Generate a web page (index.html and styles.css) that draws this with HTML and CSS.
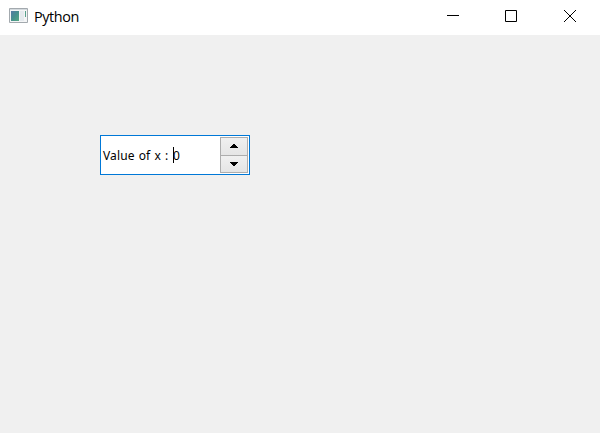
FILE: index.html
```html
<!DOCTYPE html>
<html lang="en">
<head>
<meta charset="utf-8">
<title>Python</title>
<link rel="stylesheet" href="styles.css">
</head>
<body>
<div class="window">
  <header class="titlebar">
    <svg class="app-icon" width="19" height="15" viewBox="0 0 19 15">
      <defs><linearGradient id="g" x1="0" y1="0" x2="1" y2="1"><stop offset="0" stop-color="#5579a5"/><stop offset=".5" stop-color="#46908d"/><stop offset="1" stop-color="#56a882"/></linearGradient></defs>
      <path d="M.5.5h18v14H.5z" fill="#f4f5f6" stroke="#a3a9ae"/>
      <path d="M1 1.5h17" stroke="#d4dade"/>
      <path d="M2 3h8v10H2z" fill="url(#g)"/>
      <path d="M11 3h4v10h-4z" fill="#e5eaee"/>
      <path d="M16.5 3v6" stroke="#58a18c"/>
    </svg>
    <h1 class="title">Python</h1>
    <div class="controls">
      <svg class="control" width="58" height="35" viewBox="0 0 58 35"><path d="M23 15.5h12" stroke="#000"/></svg>
      <svg class="control" width="58" height="35" viewBox="0 0 58 35"><path d="M23.5 10.5h11v11h-11z" fill="none" stroke="#000"/></svg>
      <svg class="control" width="60" height="35" viewBox="0 0 60 35"><path d="M24 10l12 12M36 10L24 22" stroke="#000" stroke-width="1"/></svg>
    </div>
  </header>
  <main class="content">
    <div class="spinbox">
      <div class="field"><span class="prefix">Value of x :</span><span class="caret"></span><span class="value">0</span></div>
      <div class="buttons">
        <div class="step"><svg width="8" height="4" viewBox="0 0 8 4" shape-rendering="crispEdges"><path d="M3 0h2v1h1v1h1v1h1v1H0V3h1V2h1V1h1z"/></svg></div>
        <div class="step"><svg width="8" height="4" viewBox="0 0 8 4" shape-rendering="crispEdges"><path d="M0 0h8v1H7v1H6v1H5v1H3V3H2V2H1V1H0z"/></svg></div>
      </div>
    </div>
  </main>
</div>
</body>
</html>
```
FILE: styles.css
```css
* { box-sizing: border-box; }
body { margin: 0; background: #f0f0f0; color: #000; }
.window { width: 600px; height: 433px; display: flex; flex-direction: column; }
.titlebar { height: 35px; background: #fff; display: flex; align-items: flex-start; padding-left: 9px; }
.app-icon { margin-top: 8px; flex: none; }
.title { margin: 6px 0 0 6px; font: 400 14.4px/21px "Open Sans", "Noto Sans", sans-serif; letter-spacing: -0.4px; }
.controls { margin-left: auto; display: flex; }
.control { display: block; }
.content { flex: 1; background: #f0f0f0; padding: 100px 0 0 100px; }
.spinbox { width: 150px; height: 40px; border: 1px solid #0078d7; background: #fff; display: flex; justify-content: space-between; padding: 1px; }
.field { display: flex; align-items: center; padding-left: 1px; font: 12px/16px "Noto Sans", sans-serif; }
.prefix { width: 70px; white-space: nowrap; letter-spacing: 0.12px; word-spacing: 0.9px; padding-top: 1px; }
.caret { width: 1px; height: 16px; background: #000; }
.value { padding-top: 1px; margin-left: -1px; }
.buttons { width: 28px; height: 36px; border: 1px solid #adadad; background: #adadad; display: grid; grid-template-rows: 1fr 1fr; gap: 1px; }
.step { background: linear-gradient(#f0f0f0, #e5e5e5); display: flex; align-items: center; justify-content: center; }
.step svg { margin-right: 1px; }
```
